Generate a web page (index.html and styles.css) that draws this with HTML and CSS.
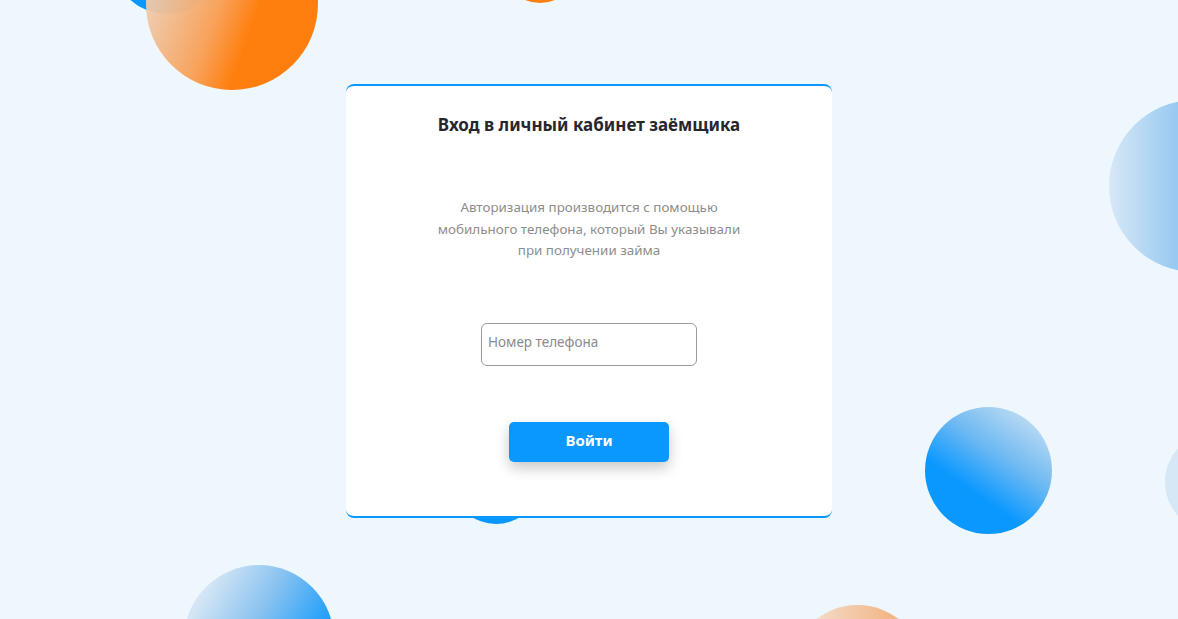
FILE: index.html
```html
<!DOCTYPE html>
<html lang="ru">
<head>
    <meta charset="UTF-8">
    <meta name="viewport" content="width=device-width, initial-scale=1.0">
    <title>Вход в личный кабинет</title>
    <link rel="stylesheet" href="styles.css">
</head>
<body>
    <div class="bubbles">
        <span class="bubble b-blue-top"></span>
        <span class="bubble b-orange-top"></span>
        <span class="bubble b-orange-mid"></span>
        <span class="bubble b-right"></span>
        <span class="bubble b-right-low"></span>
        <span class="bubble b-edge"></span>
        <span class="bubble b-under-card"></span>
        <span class="bubble b-bottom-left"></span>
        <span class="bubble b-bottom-orange"></span>
    </div>

    <div class="card">
        <h1 class="title">Вход в личный кабинет заёмщика</h1>
        <p class="note">Авторизация производится с помощью<br>мобильного телефона, который Вы указывали<br>при получении займа</p>
        <form class="login" action="#">
            <input class="phone" type="tel" name="phone" placeholder="Номер телефона">
            <button class="submit" type="submit">Войти</button>
        </form>
    </div>
</body>
</html>
```

FILE: styles.css
```css
html, body{
    margin: 0;
    height: 100%;
}

body{
    background-color: #eff7fe;
    font-family: "Noto Sans", "Open Sans", sans-serif;
    overflow: hidden;
    position: relative;
}

.bubbles{
    position: absolute;
    inset: 0;
    overflow: hidden;
}

.bubble{
    position: absolute;
    border-radius: 50%;
}

.b-blue-top{
    left: 112px;
    top: -96px;
    width: 110px;
    height: 110px;
    background: linear-gradient(200deg, #a6cbe6 10%, #0a98ff 70%);
}

.b-orange-top{
    left: 146px;
    top: -82px;
    width: 172px;
    height: 172px;
    background: linear-gradient(110deg, rgba(236, 216, 200, 0.92) 5%, #f8a25a 45%, #ff7f0e 62%);
}

.b-orange-mid{
    left: 500px;
    top: -80px;
    width: 80px;
    height: 83px;
    background: #ff7f0e;
}

.b-right{
    left: 1109px;
    top: 100px;
    width: 172px;
    height: 172px;
    background: linear-gradient(90deg, #d7e8f6 0%, #86c1f0 50%, #3fa5f4 100%);
}

.b-right-low{
    left: 925px;
    top: 407px;
    width: 127px;
    height: 127px;
    background: linear-gradient(35deg, #0a98ff 35%, #6bb8f2 60%, #cfe3f3 95%);
}

.b-edge{
    left: 1165px;
    top: 432px;
    width: 100px;
    height: 100px;
    background: #d6e7f5;
}

.b-under-card{
    left: 458px;
    top: 460px;
    width: 76px;
    height: 64px;
    background: #0a98ff;
}

.b-bottom-left{
    left: 184px;
    top: 565px;
    width: 150px;
    height: 150px;
    background: linear-gradient(120deg, #d4e6f5 15%, #86c1f0 45%, #0a98ff 80%);
}

.b-bottom-orange{
    left: 790px;
    top: 605px;
    width: 135px;
    height: 135px;
    background: linear-gradient(90deg, #f3dac6 20%, #f2b380 80%);
}

.card{
    position: relative;
    width: 486px;
    margin: 84px auto 0;
    padding: 28px 0 54px;
    box-sizing: border-box;
    background-color: #fff;
    border-top: 2px solid #0a98ff;
    border-bottom: 2px solid #0a98ff;
    border-radius: 8px;
    text-align: center;
}

.title{
    margin: 0;
    font-size: 17px;
    line-height: 22px;
    font-weight: 700;
    color: #27262d;
}

.note{
    margin: 61px 0 0;
    font-size: 13.4px;
    line-height: 21.5px;
    color: #8d8d8d;
}

.login{
    display: flex;
    flex-direction: column;
    align-items: center;
}

.phone{
    margin-top: 61px;
    width: 216px;
    height: 43px;
    box-sizing: border-box;
    padding: 0 6px 4px;
    border: 1px solid #9a9a9a;
    border-radius: 6px;
    font-family: inherit;
    font-size: 13.5px;
    color: #333;
    outline: none;
}

.phone::placeholder{
    color: #8a8a8a;
}

.submit{
    margin-top: 56px;
    width: 160px;
    height: 40px;
    padding: 0 0 4px;
    border: none;
    border-radius: 5px;
    background-color: #0a98ff;
    color: #fff;
    font-family: inherit;
    font-size: 15px;
    font-weight: 700;
    box-shadow: 0 6px 14px rgba(0, 0, 0, 0.22);
    cursor: pointer;
}
```
